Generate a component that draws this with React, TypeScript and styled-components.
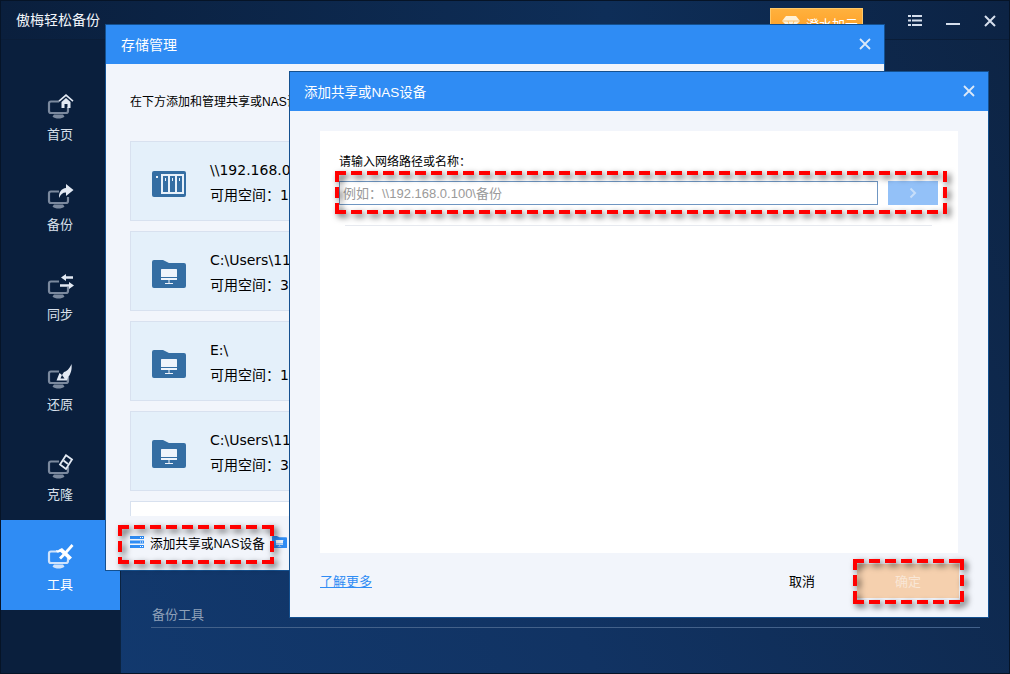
import React from 'react';
import styled, { createGlobalStyle } from 'styled-components';

const GlobalStyle = createGlobalStyle`
  html, body {
    margin: 0;
    padding: 0;
    background: #071a33;
  }
  * {
    box-sizing: border-box;
  }
`;

const MonitorBase = () => (
  <>
    <path
      d="M12 7.500H4A2 2 0 0 0 2 9.500V17a2 2 0 0 0 2 2h15a2 2 0 0 0 2-2v-4"
      fill="none"
      stroke="currentColor"
      strokeWidth="2.200"
    />
    <path d="M7 20.500h9l1.500 2c-1.500 1.500-3.500 2-6 2s-4.500-.5-6-2z" fill="currentColor" />
  </>
);

const HomeGlyph = () => (
  <g fill="#e3e9f3">
    <path d="M19 0l7.500 6.500-1 1.200L19 2.200l-6.500 5.500-1-1.200z" />
    <path d="M19 4l4.500 4v6h-3V10h-3v4h-3V8z" />
  </g>
);
const ShareGlyph = () => (
  <path d="M19 0l7.500 6-7.500 6V8.500c-3.500 0-5.500 2-7 5.500-.3-6 2.500-9.500 7-10z" fill="#e3e9f3" />
);
const SyncGlyph = () => (
  <g fill="#e3e9f3">
    <path d="M14 3.500 19 0v2.300h7v2.500h-7v2.200z" />
    <path d="M27 11.500 22 15v-2.300h-9v-2.500h9V8z" />
  </g>
);
const RestoreGlyph = () => (
  <g>
    <path d="M24.500 0c.8 5.500-1 10.500-3.500 13.500l-1 3H9.500l3-7.500 2.500 2 2-3c2.500-.5 5.500-3 7.500-8z" fill="#e3e9f3" />
    <path d="M15 11l-1.500 3.500h4z" fill="#0a1f3d" />
  </g>
);
const CloneGlyph = () => (
  <g fill="none" stroke="#e3e9f3" strokeWidth="1.800">
    <path d="M19 1.200 25 5.500l-6 9.500-6-4.500z" />
    <path d="M16.500 6.500l4.500 3.500" />
  </g>
);
const ToolGlyph = () => (
  <g fill="#ffffff">
    <path d="M24.500 0l2 2-7.500 8.500-2-2z" />
    <path d="M12 5.500l3-1.500 10 9.500-2.500 2.500-9-8-3.500.5-1-2.500 2 .5z" />
    <path d="M12 13.500l4-4 2 2-4 4z" />
  </g>
);

const navItems = [
  { label: '首页', glyph: <HomeGlyph /> },
  { label: '备份', glyph: <ShareGlyph /> },
  { label: '同步', glyph: <SyncGlyph /> },
  { label: '还原', glyph: <RestoreGlyph /> },
  { label: '克隆', glyph: <CloneGlyph /> },
  { label: '工具', glyph: <ToolGlyph />, active: true },
];

const storageItems = [
  { path: '\\\\192.168.0.100', free: '可用空间：1.52 TB', nas: true },
  { path: 'C:\\Users\\11\\Desktop', free: '可用空间：35.6 GB' },
  { path: 'E:\\', free: '可用空间：120 GB' },
  { path: 'C:\\Users\\11\\Backup', free: '可用空间：35.6 GB' },
];

const CloseIcon = () => (
  <CloseSvg viewBox="0 0 12 12">
    <path d="M1 1l10 10M11 1 1 11" stroke="currentColor" strokeWidth="1.800" fill="none" />
  </CloseSvg>
);

const NasIcon = () => (
  <svg width="34" height="26" viewBox="0 0 34 26">
    <rect width="34" height="26" rx="2" fill="#346ea3" />
    <rect x="4" y="5" width="2" height="2" fill="#e8f1fa" />
    <rect x="9" y="3" width="23" height="20" fill="#e8f1fa" />
    <rect x="11" y="5" width="5" height="16" fill="#346ea3" />
    <rect x="18" y="5" width="5" height="16" fill="#346ea3" />
    <rect x="25" y="5" width="5" height="16" fill="#346ea3" />
    <rect x="13" y="7" width="1" height="3" fill="#e8f1fa" />
    <rect x="20" y="7" width="1" height="3" fill="#e8f1fa" />
    <rect x="27" y="7" width="1" height="3" fill="#e8f1fa" />
  </svg>
);

const FolderIcon = ({ size = 34, color = '#346ea3' }: { size?: number; color?: string }) => (
  <svg width={size} height={(size * 28) / 34} viewBox="0 0 34 28">
    <path
      d="M0 2a2 2 0 0 1 2-2h9l6 3h15a2 2 0 0 1 2 2v21a2 2 0 0 1-2 2H2a2 2 0 0 1-2-2z"
      fill={color}
    />
    <rect x="9" y="9" width="16" height="11" rx="0.500" fill="#eef4fb" />
    <rect x="9" y="17" width="16" height="1" fill={color} />
    <rect x="16.500" y="20" width="1" height="3" fill="#eef4fb" />
    <rect x="13" y="23" width="8" height="1" fill="#eef4fb" />
  </svg>
);

const ServerIcon = () => (
  <svg width="14" height="12" viewBox="0 0 14 12">
    <g fill="#2f8cf4">
      <rect y="0" width="14" height="3" />
      <rect y="4.500" width="14" height="3" />
      <rect y="9" width="14" height="3" />
    </g>
    <g fill="#ffffff">
      <rect x="10" y="1" width="1" height="1" />
      <rect x="12" y="1" width="1" height="1" />
      <rect x="10" y="5.500" width="1" height="1" />
      <rect x="12" y="5.500" width="1" height="1" />
      <rect x="10" y="10" width="1" height="1" />
      <rect x="12" y="10" width="1" height="1" />
    </g>
  </svg>
);

export default function App() {
  return (
    <Screen>
      <GlobalStyle />
      <TopBar>
        <AppTitle>傲梅轻松备份</AppTitle>
        <UpgradeButton>
          <svg width="18" height="14" viewBox="0 0 18 14">
            <path d="M4 0h10l4 5-9 9-9-9z" fill="#fff1d8" />
            <path d="M0 5h18M6 5l3 9 3-9" stroke="#ffb347" strokeWidth="0.700" fill="none" />
          </svg>
          <span>澄水加云</span>
        </UpgradeButton>
        <WindowControls>
          <svg width="14" height="12" viewBox="0 0 14 12" fill="#d5deec">
            <rect width="3" height="2" />
            <rect x="4" width="10" height="2" />
            <rect y="4.500" width="3" height="2" />
            <rect x="4" y="4.500" width="10" height="2" />
            <rect y="9" width="3" height="2" />
            <rect x="4" y="9" width="10" height="2" />
          </svg>
          <svg width="14" height="12" viewBox="0 0 14 12" fill="#d5deec">
            <rect y="8" width="14" height="2" />
          </svg>
          <svg width="12" height="12" viewBox="0 0 12 12">
            <path d="M1 1l10 10M11 1 1 11" stroke="#d5deec" strokeWidth="2" fill="none" />
          </svg>
        </WindowControls>
      </TopBar>

      <Body>
        <Sidebar>
          {navItems.map((item) => (
            <NavItem key={item.label} $active={item.active}>
              <NavIconBox $active={item.active}>
                <svg width="28" height="26" viewBox="0 0 28 26">
                  <MonitorBase />
                  {item.glyph}
                </svg>
              </NavIconBox>
              <NavLabel>{item.label}</NavLabel>
            </NavItem>
          ))}
        </Sidebar>
        <Main>
          <SectionTitle>备份工具</SectionTitle>
        </Main>
      </Body>

      <StorageWindow>
        <WindowHeader>
          <span>存储管理</span>
          <CloseIcon />
        </WindowHeader>
        <StorageBody>
          <Intro>在下方添加和管理共享或NAS设备</Intro>
          <StorageList>
            {storageItems.map((item) => (
              <StorageCard key={item.path}>
                <StorageIconBox>{item.nas ? <NasIcon /> : <FolderIcon />}</StorageIconBox>
                <StorageText>
                  <div>{item.path}</div>
                  <div>{item.free}</div>
                </StorageText>
              </StorageCard>
            ))}
            <StorageCard $blank />
          </StorageList>
        </StorageBody>
        <StorageFooter>
          <ServerIcon />
          <span>添加共享或NAS设备</span>
          <FooterFolder>
            <FolderIcon size={15} color="#2f8cf4" />
          </FooterFolder>
        </StorageFooter>
      </StorageWindow>

      <AddWindow>
        <AddHeader>
          <span>添加共享或NAS设备</span>
          <CloseIcon />
        </AddHeader>
        <AddBody>
          <FormPanel>
            <FieldLabel>请输入网络路径或名称：</FieldLabel>
            <FieldRow>
              <PathInput readOnly placeholder="例如：\\192.168.0.100\备份" />
              <GoButton>
                <svg width="8" height="12" viewBox="0 0 8 12">
                  <path d="M1.500 1.500 6 6l-4.500 4.500" stroke="#c6defa" strokeWidth="2" fill="none" />
                </svg>
              </GoButton>
            </FieldRow>
            <Divider />
          </FormPanel>
          <DialogFooter>
            <LearnMore href="#">了解更多</LearnMore>
            <CancelButton>取消</CancelButton>
            <ConfirmButton>确定</ConfirmButton>
          </DialogFooter>
        </AddBody>
      </AddWindow>

      <Highlight $x={117} $y={524} $w={156} $h={39} />
      <Highlight $x={334} $y={170} $w={612} $h={43} />
      <Highlight $x={852} $y={558} $w={111} $h={45} />
    </Screen>
  );
}

const Screen = styled.div`
  position: relative;
  display: flex;
  flex-direction: column;
  width: 1010px;
  height: 674px;
  overflow: hidden;
  border: 1px solid #061427;
  background: linear-gradient(65deg, #123a70 0%, #113363 45%, #0d2444 100%);
  font-family: 'Liberation Sans', 'Noto Sans CJK SC', sans-serif;
  font-size: 13px;
  color: #000;
`;

const TopBar = styled.header`
  display: flex;
  align-items: flex-start;
  flex: none;
  height: 39px;
  padding-left: 15px;
  background: linear-gradient(90deg, #0a1f3d 0%, #0e2e58 60%, #0c2344 100%);
  border-bottom: 1px solid #0a1d38;
`;

const AppTitle = styled.div`
  margin-top: 8px;
  font-size: 14px;
  line-height: 22px;
  color: #f2f5fa;
`;

const UpgradeButton = styled.div`
  display: flex;
  align-items: center;
  gap: 6px;
  width: 93px;
  height: 30px;
  margin: 7px 0 0 auto;
  padding-left: 11px;
  color: #fff;
  background: linear-gradient(180deg, #ffb13e 0%, #ff9a1e 100%);
  border: 1px solid #ffc868;
`;

const WindowControls = styled.div`
  display: flex;
  align-items: center;
  gap: 24px;
  height: 20px;
  margin: 10px 13px 0 45px;
`;

const Body = styled.div`
  display: flex;
  flex: 1;
  min-height: 0;
`;

const Sidebar = styled.nav`
  flex: none;
  width: 120px;
  padding-top: 30px;
  background: #0a1f3d;
  border-right: 1px solid #0b2340;
`;

const NavItem = styled.div<{ $active?: boolean }>`
  display: flex;
  flex-direction: column;
  align-items: center;
  height: 90px;
  padding-top: 24px;
  font-size: 13px;
  line-height: 18px;
  color: ${(p) => (p.$active ? '#ffffff' : '#d9e1ec')};
  background: ${(p) => (p.$active ? '#2f8cf4' : 'transparent')};
`;

const NavIconBox = styled.div<{ $active?: boolean }>`
  height: 26px;
  margin: 0 0 6px 1px;
  color: ${(p) => (p.$active ? '#cfe3fb' : '#7b899e')};
`;

const NavLabel = styled.span`
  margin-right: 1px;
`;

const Main = styled.main`
  display: flex;
  flex: 1;
  flex-direction: column;
  justify-content: flex-end;
  padding: 0 29px 45px 30px;
`;

const SectionTitle = styled.div`
  padding: 0 0 3px 1px;
  font-size: 13px;
  line-height: 18px;
  color: #8ea0b8;
  border-bottom: 1px solid #43618a;
`;

const DialogWindow = styled.section`
  position: absolute;
  display: flex;
  flex-direction: column;
  height: 547px;
  overflow: hidden;
  background: #f2f5fb;
  border: 1px solid #14508f;
`;

const StorageWindow = styled(DialogWindow)`
  top: 23px;
  left: 104px;
  width: 780px;
`;

const AddWindow = styled(DialogWindow)`
  top: 70px;
  left: 288px;
  width: 700px;
`;

const WindowHeader = styled.div`
  display: flex;
  flex: none;
  align-items: center;
  justify-content: space-between;
  height: 39px;
  padding: 0 13px 2px 15px;
  font-size: 14px;
  color: #fff;
  background: #2f8cf4;
`;

const AddHeader = styled(WindowHeader)`
  padding-left: 14px;
  font-size: 13.5px;
`;

const CloseSvg = styled.svg`
  width: 12px;
  height: 12px;
  color: #dbe8f8;
`;

const StorageBody = styled.div`
  display: flex;
  flex: 1;
  flex-direction: column;
  min-height: 0;
  overflow: hidden;
  padding: 0 24px;
`;

const Intro = styled.div`
  flex: none;
  height: 77px;
  padding-top: 29px;
  font-size: 12px;
  line-height: 18px;
`;

const StorageList = styled.div`
  display: flex;
  flex-direction: column;
  gap: 10px;
`;

const StorageCard = styled.div<{ $blank?: boolean }>`
  display: flex;
  flex: none;
  align-items: center;
  height: 80px;
  background: ${(p) => (p.$blank ? '#ffffff' : '#e4f0fa')};
  border: 1px solid #d8e1ef;
`;

const StorageIconBox = styled.div`
  display: flex;
  flex: none;
  justify-content: center;
  width: 76px;
  padding-top: 6px;
`;

const StorageText = styled.div`
  margin-left: 3px;
  padding-top: 4px;
  font-family: 'DejaVu Sans', 'Noto Sans CJK SC', sans-serif;
  font-size: 14px;
  line-height: 25px;
  white-space: nowrap;
`;

const StorageFooter = styled.div`
  display: flex;
  flex: none;
  align-items: center;
  gap: 6px;
  height: 54px;
  padding: 0 0 2px 24px;
  font-size: 12.7px;
  background: #f2f5fb;
`;

const FooterFolder = styled.div`
  display: flex;
  margin-left: 1px;
`;

const AddBody = styled.div`
  display: flex;
  flex: 1;
  flex-direction: column;
  min-height: 0;
  padding: 20px 30px 0;
`;

const FormPanel = styled.div`
  flex: 1;
  padding: 22px 20px 0 19px;
  background: #ffffff;
`;

const FieldLabel = styled.div`
  font-size: 12px;
  line-height: 18px;
`;

const FieldRow = styled.div`
  display: flex;
  gap: 10px;
  margin-top: 10px;
`;

const PathInput = styled.input`
  flex: 1;
  height: 24px;
  padding: 0 3px;
  font-family: inherit;
  font-size: 13px;
  background: #fff;
  border: 1px solid #6f96c2;
  outline: none;

  &::placeholder {
    color: #9a9a9a;
    opacity: 1;
  }
`;

const GoButton = styled.div`
  display: flex;
  flex: none;
  align-items: center;
  justify-content: center;
  width: 50px;
  height: 24px;
  background: #93c1f8;
`;

const Divider = styled.div`
  height: 1px;
  margin: 20px 6px 0;
  background: #e6e9ef;
`;

const DialogFooter = styled.div`
  display: flex;
  flex: none;
  align-items: center;
  height: 64px;
  padding-bottom: 9px;
`;

const LearnMore = styled.a`
  font-size: 13px;
  color: #2f8cf4;
`;

const CancelButton = styled.div`
  margin-left: auto;
  font-size: 13px;
`;

const ConfirmButton = styled.div`
  display: flex;
  align-items: center;
  justify-content: center;
  width: 102px;
  height: 34px;
  margin: 0 -1px 0 42px;
  font-size: 13px;
  color: #f9e7d6;
  background: #f5d0ae;
`;

const Highlight = styled.div.attrs<{ $x: number; $y: number; $w: number; $h: number }>((p) => ({
  style: { left: p.$x, top: p.$y, width: p.$w, height: p.$h },
}))<{ $x: number; $y: number; $w: number; $h: number }>`
  position: absolute;
  background:
    repeating-linear-gradient(90deg, #ff0000 0 11px, transparent 11px 16px) top / 100% 4px no-repeat,
    repeating-linear-gradient(90deg, #ff0000 0 11px, transparent 11px 16px) bottom / 100% 4px no-repeat,
    repeating-linear-gradient(180deg, #ff0000 0 11px, transparent 11px 16px) left / 4px 100% no-repeat,
    repeating-linear-gradient(180deg, #ff0000 0 11px, transparent 11px 16px) right / 4px 100% no-repeat;
  filter: drop-shadow(3px 3px 3px rgba(0, 0, 0, 0.65));
  pointer-events: none;
`;
